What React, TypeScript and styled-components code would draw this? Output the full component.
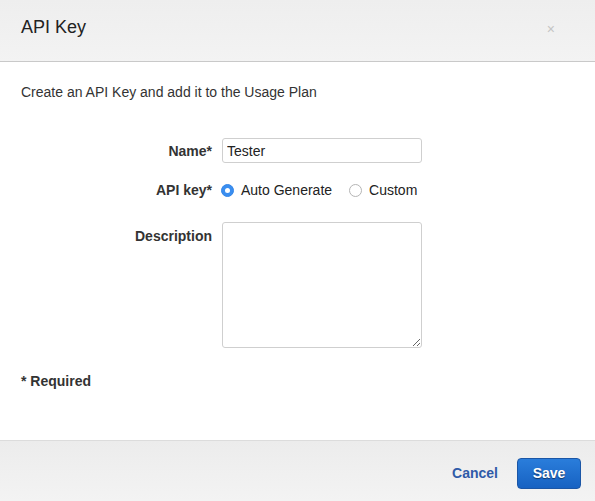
import React from "react";
import styled, { createGlobalStyle } from "styled-components";

const Global = createGlobalStyle`
  html, body { margin: 0; padding: 0; background: #fff; }
  body { font-family: "Liberation Sans", Arial, sans-serif; color: #333; }
  * { box-sizing: border-box; }
`;

const Dialog = styled.div`
  width: 595px;
  height: 501px;
  display: flex;
  flex-direction: column;
  background: #fff;
`;

const Header = styled.div`
  height: 62px;
  flex: none;
  display: flex;
  align-items: center;
  justify-content: space-between;
  padding: 0 40px 6px 21px;
  background: linear-gradient(to bottom, #eeeeee, #f3f3f3);
  border-bottom: 1px solid #c9c9c9;
`;

const Title = styled.h1`
  margin: 0;
  font-size: 18px;
  font-weight: normal;
  color: #222;
`;

const Close = styled.button`
  border: none;
  background: none;
  padding: 0;
  font-family: "Liberation Sans", Arial, sans-serif;
  font-size: 14px;
  color: #c4c4c4;
  line-height: 1;
  cursor: pointer;
  margin-top: 2px;
`;

const Body = styled.div`
  flex: 1;
  padding: 20px 21px 0;
  display: flex;
  flex-direction: column;
`;

const Intro = styled.p`
  margin: 0;
  font-size: 14px;
  line-height: 20px;
  color: #333;
`;

const Form = styled.div`
  display: flex;
  flex-direction: column;
`;

const Row = styled.div<{ $mt: number; $top?: boolean }>`
  display: grid;
  grid-template-columns: 191px 200px;
  column-gap: 10px;
  align-items: ${(p) => (p.$top ? "start" : "center")};
  margin-top: ${(p) => p.$mt}px;
`;

const Label = styled.label<{ $pt?: number }>`
  text-align: right;
  font-size: 14px;
  font-weight: bold;
  line-height: 20px;
  color: #333;
  padding-top: ${(p) => p.$pt ?? 0}px;
`;

const TextInput = styled.input`
  width: 200px;
  height: 25px;
  border: 1px solid #cfcfcf;
  border-radius: 3px;
  padding: 0 4px;
  font-family: "Liberation Sans", Arial, sans-serif;
  font-size: 14px;
  color: #222;
  outline: none;
`;

const Radios = styled.div`
  display: flex;
  align-items: center;
  height: 20px;
`;

const RadioOption = styled.label<{ $gap: number }>`
  display: flex;
  align-items: center;
  font-size: 14px;
  color: #222;
  margin-right: ${(p) => p.$gap}px;
  white-space: nowrap;
`;

const Dot = styled.span<{ $on: boolean }>`
  width: 13px;
  height: 13px;
  border-radius: 50%;
  margin: 0 7px 0 -1px;
  flex: none;
  background: ${(p) => (p.$on ? "#3a8ef0" : "#fff")};
  border: 1px solid ${(p) => (p.$on ? "#3486e8" : "#b5b5b5")};
  display: flex;
  align-items: center;
  justify-content: center;
  &::after {
    content: "";
    width: 5px;
    height: 5px;
    border-radius: 50%;
    background: #fff;
    display: ${(p) => (p.$on ? "block" : "none")};
  }
`;

const TextArea = styled.textarea`
  width: 200px;
  height: 126px;
  border: 1px solid #cfcfcf;
  border-radius: 3px;
  font-family: "Liberation Sans", Arial, sans-serif;
  font-size: 14px;
  outline: none;
  resize: both;
`;

const Required = styled.p`
  margin: 23px 0 0;
  font-size: 14px;
  font-weight: bold;
  line-height: 20px;
  color: #333;
`;

const Footer = styled.div`
  height: 61px;
  flex: none;
  display: flex;
  align-items: center;
  justify-content: flex-end;
  gap: 19px;
  padding: 4px 14px 0 0;
  background: linear-gradient(to bottom, #ececec, #f3f3f3);
  border-top: 1px solid #dcdcdc;
`;

const CancelLink = styled.button`
  border: none;
  background: none;
  padding: 0;
  font-family: "Liberation Sans", Arial, sans-serif;
  font-size: 14px;
  font-weight: bold;
  color: #2f5ba8;
  cursor: pointer;
`;

const SaveButton = styled.button`
  width: 64px;
  height: 31px;
  border: 1px solid #1b56a6;
  border-radius: 4px;
  background: linear-gradient(to bottom, #2a7ddb, #1762c2);
  color: #fff;
  font-family: "Liberation Sans", Arial, sans-serif;
  font-size: 14px;
  font-weight: bold;
  text-shadow: 0 1px 1px rgba(0, 0, 0, 0.5);
  cursor: pointer;
`;

export default function App() {
  return (
    <>
      <Global />
      <Dialog>
        <Header>
          <Title>API Key</Title>
          <Close aria-label="Close">×</Close>
        </Header>
        <Body>
          <Intro>Create an API Key and add it to the Usage Plan</Intro>
          <Form>
            <Row $mt={36}>
              <Label>Name*</Label>
              <TextInput defaultValue="Tester" />
            </Row>
            <Row $mt={17}>
              <Label>API key*</Label>
              <Radios>
                <RadioOption $gap={18}>
                  <Dot $on={true} />
                  Auto Generate
                </RadioOption>
                <RadioOption $gap={0}>
                  <Dot $on={false} />
                  Custom
                </RadioOption>
              </Radios>
            </Row>
            <Row $mt={22} $top>
              <Label $pt={4}>Description</Label>
              <TextArea />
            </Row>
          </Form>
          <Required>* Required</Required>
        </Body>
        <Footer>
          <CancelLink>Cancel</CancelLink>
          <SaveButton>Save</SaveButton>
        </Footer>
      </Dialog>
    </>
  );
}
